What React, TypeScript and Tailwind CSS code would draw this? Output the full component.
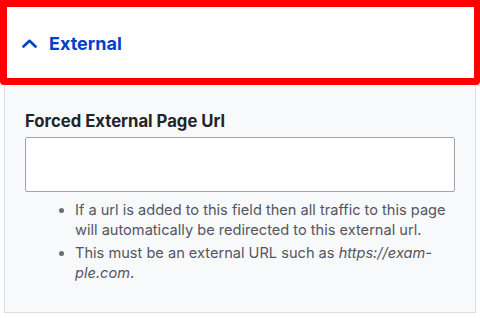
import React from "react";

export default function App() {
  return (
    <div className="w-[480px] h-[318px] bg-white overflow-hidden font-['Inter',sans-serif]">
      <div className="h-[85px] border-[7px] border-r-[6px] border-[#fe0000] rounded-b-[4px] bg-white flex items-center pl-[15px] gap-[12px]">
        <svg width="15" height="9" viewBox="0 0 15 9" className="shrink-0 mt-[1px]">
          <polyline
            points="1.5,7.5 7.5,1.8 13.5,7.5"
            fill="none"
            stroke="#003ecc"
            strokeWidth="2.6"
            strokeLinecap="round"
            strokeLinejoin="round"
          />
        </svg>
        <span className="text-[18px] leading-[24px] font-bold text-[#003ecc] mt-[2px]">External</span>
      </div>
      <div className="mx-[4px] h-[228px] border-x border-b border-[#dcdde2] bg-[#f8f9fb] px-[20px] pt-[24px]">
        <div className="text-[16.7px] leading-[24px] font-bold text-[#232429]">Forced External Page Url</div>
        <div className="mt-[4px] h-[55px] w-full rounded-[2px] border border-[#a3a4ab] bg-white"></div>
        <ul className="mt-[8px] ml-[50px] list-disc text-[14.6px] leading-[20px] text-[#545560] marker:text-[#6b6c75]">
          <li>If a url is added to this field then all traffic to this page will automatically be redirected to this external url.</li>
          <li className="mt-[3px]">
            This must be an external URL such as <em>https://exam-<br />ple.com</em>.
          </li>
        </ul>
      </div>
    </div>
  );
}
